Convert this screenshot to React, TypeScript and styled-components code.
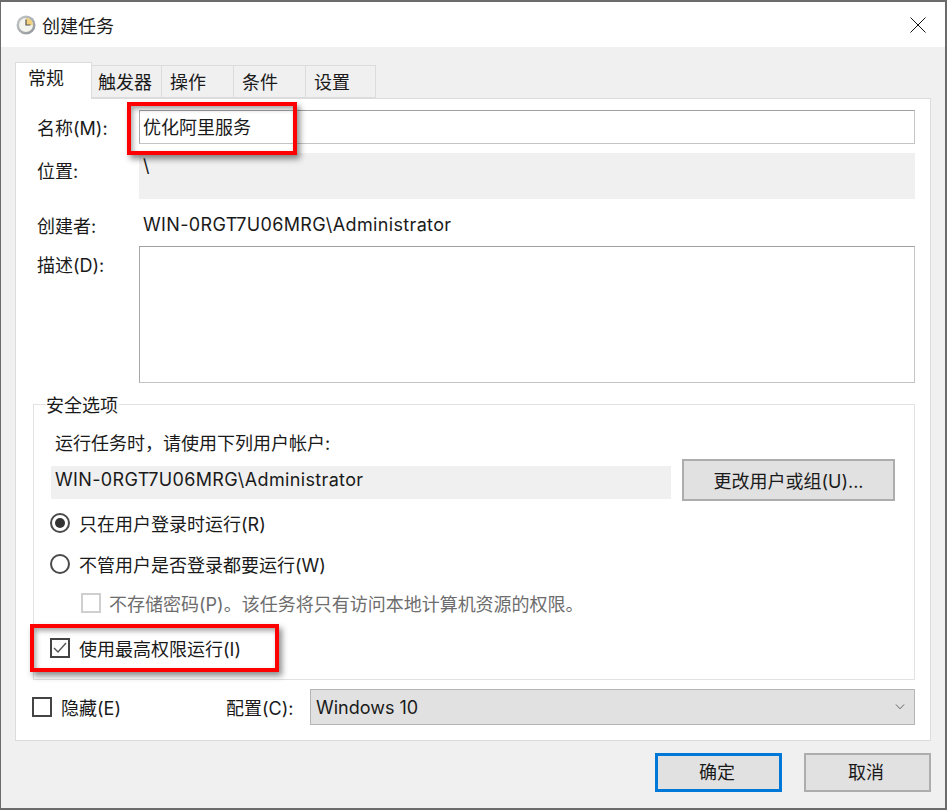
import styled, { createGlobalStyle } from 'styled-components';

const GlobalStyle = createGlobalStyle`
  html, body {
    margin: 0;
    padding: 0;
    background: #fff;
  }
  * {
    box-sizing: border-box;
  }
`;

const FONT = `Inter, "Noto Sans CJK SC", sans-serif`;

const Window = styled.div`
  position: relative;
  width: 947px;
  height: 810px;
  display: flex;
  flex-direction: column;
  border: 1px solid #6b6b6b;
  border-width: 2px 2px 2px 1px;
  background: #f0f0f0;
  font-family: ${FONT};
  font-size: 18px;
  color: #1a1a1a;
  overflow: hidden;
`;

const TitleBar = styled.div`
  height: 45px;
  flex-shrink: 0;
  display: flex;
  align-items: center;
  background: #fff;
  padding: 0 19px 0 15px;
  gap: 6px;
`;

const Title = styled.span`
  flex: 1;
  font-size: 18px;
`;

const TabStrip = styled.div`
  display: flex;
  align-items: flex-end;
  height: 36px;
  margin: 15px 0 0 14px;
`;

const ActiveTab = styled.div`
  position: relative;
  z-index: 1;
  height: 37px;
  width: 77px;
  margin-bottom: -1px;
  padding: 0 0 8px 12px;
  display: flex;
  align-items: center;
  background: #fff;
  border: 1px solid #dcdcdc;
  border-bottom-width: 0;
  white-space: nowrap;
`;

const Tab = styled.div<{ $width: number; $pad: number }>`
  height: 33px;
  width: ${(p) => p.$width}px;
  padding: 0 0 2px ${(p) => p.$pad}px;
  display: flex;
  align-items: center;
  background: #f0f0f0;
  border: 1px solid #dcdcdc;
  border-left-width: 0;
  white-space: nowrap;
`;

const Panel = styled.div`
  width: 916px;
  height: 643px;
  margin-left: 14px;
  padding: 11px 15px 0 21px;
  background: #fff;
  border: 1px solid #dcdcdc;
  display: flex;
  flex-direction: column;
`;

const FormRow = styled.div<{ $top: number; $height: number; $center?: boolean }>`
  display: flex;
  align-items: ${(p) => (p.$center ? 'center' : 'flex-start')};
  margin-top: ${(p) => p.$top}px;
  height: ${(p) => p.$height}px;
`;

const Label = styled.label<{ $offset?: number }>`
  width: 102px;
  flex-shrink: 0;
  padding-top: ${(p) => p.$offset ?? 0}px;
  white-space: nowrap;
`;

const TextBox = styled.div`
  flex: 1;
  height: 100%;
  padding: 2px 3px;
  background: #fff;
  border: 1px solid;
  border-color: #a0a0a0 #c4c4c4 #c4c4c4 #a8a8a8;
`;

const ReadOnlyBox = styled.div`
  flex: 1;
  height: 100%;
  padding: 2px 4px 0;
  background: #f0f0f0;
`;

const CreatorName = styled.span`
  flex: 1;
  padding: 0 4px 2px;
  letter-spacing: 0.35px;
`;

const Group = styled.div`
  position: relative;
  width: 882px;
  height: 276px;
  margin: 21px 0 0 -4px;
  padding: 25px 0 0 17px;
  border: 1px solid #e2e2e2;
`;

const Legend = styled.span`
  position: absolute;
  top: -11px;
  left: 12px;
  padding: 0 1px 0 0;
  background: #fff;
  line-height: 24px;
`;

const AccountLabel = styled.div`
  height: 26px;
  line-height: 28px;
  padding-left: 4px;
`;

const AccountRow = styled.div`
  display: flex;
  align-items: flex-start;
  margin-top: 3px;
  height: 42px;
`;

const AccountField = styled.div`
  width: 620px;
  height: 33px;
  margin-top: 7px;
  padding-left: 4px;
  line-height: 28px;
  letter-spacing: 0.35px;
  background: #f0f0f0;
`;

const Button = styled.div<{ $width: number; $height: number }>`
  width: ${(p) => p.$width}px;
  height: ${(p) => p.$height}px;
  display: flex;
  align-items: center;
  justify-content: center;
  background: #e1e1e1;
  border: 2px solid #adadad;
`;

const ChangeUserButton = styled(Button)`
  margin-left: 11px;
`;

const DialogButton = styled(Button)<{ $primary?: boolean }>`
  padding: 0 3px 3px 0;
  ${(p) => (p.$primary ? 'border: 3px solid #0078d7;' : '')}
`;

const OptionRow = styled.div<{ $top: number; $indent?: number; $gap?: number; $muted?: boolean }>`
  display: flex;
  align-items: center;
  margin-top: ${(p) => p.$top}px;
  margin-left: ${(p) => p.$indent ?? -1}px;
  height: 24px;
  gap: ${(p) => p.$gap ?? 9}px;
  color: ${(p) => (p.$muted ? '#6d6d6d' : 'inherit')};
`;

const Radio = styled.span<{ $checked?: boolean }>`
  width: 20px;
  height: 20px;
  flex-shrink: 0;
  display: flex;
  align-items: center;
  justify-content: center;
  border: 2px solid #4a4a4a;
  border-radius: 50%;
  &::after {
    content: '';
    width: 10px;
    height: 10px;
    border-radius: 50%;
    background: ${(p) => (p.$checked ? '#333' : 'transparent')};
  }
`;

const CheckBox = styled.span<{ $disabled?: boolean }>`
  width: 20px;
  height: 20px;
  flex-shrink: 0;
  display: flex;
  align-items: center;
  justify-content: center;
  background: #fff;
  border: 2px solid ${(p) => (p.$disabled ? '#cfcfcf' : '#444')};
`;

const BottomRow = styled.div`
  display: flex;
  align-items: center;
  height: 36px;
  margin: 9px 0 0 -5px;
`;

const HiddenOption = styled.div`
  display: flex;
  align-items: center;
  gap: 9px;
  width: 194px;
`;

const ConfigLabel = styled.span`
  width: 84px;
  white-space: nowrap;
`;

const Select = styled.div`
  width: 605px;
  height: 36px;
  display: flex;
  align-items: center;
  justify-content: space-between;
  padding: 0 9px 0 5px;
  background: #e1e1e1;
  border: 1px solid #b5b5b5;
`;

const Footer = styled.div`
  display: flex;
  justify-content: flex-end;
  gap: 22px;
  margin-top: 12px;
  padding-right: 14px;
`;

const Callout = styled.div<{ $left: number; $top: number; $w: number; $h: number }>`
  position: absolute;
  left: ${(p) => p.$left}px;
  top: ${(p) => p.$top}px;
  width: ${(p) => p.$w}px;
  height: ${(p) => p.$h}px;
  border: 4px solid #f00;
  box-shadow:
    3px 4px 6px rgba(0, 0, 0, 0.45),
    inset 2px 3px 5px rgba(0, 0, 0, 0.35);
  pointer-events: none;
`;

const ClockIcon = () => (
  <svg width="20" height="20" viewBox="0 0 20 20">
    <defs>
      <linearGradient id="rim" x1="0" y1="0" x2="1" y2="1">
        <stop offset="0" stopColor="#c9ccce" />
        <stop offset="1" stopColor="#8d9296" />
      </linearGradient>
    </defs>
    <circle cx="10" cy="10" r="9.5" fill="url(#rim)" />
    <circle cx="10" cy="10" r="7" fill="#f4f4ee" />
    <path d="M10 3 A7 7 0 0 1 17 10 L10 10 Z" fill="#f2d27c" />
    <path d="M10 4.5 V10 H14.5" fill="none" stroke="#555" strokeWidth="1.2" />
  </svg>
);

const CloseIcon = () => (
  <svg width="16" height="16" viewBox="0 0 16 16">
    <path d="M0.5 0.5 L15.5 15.5 M15.5 0.5 L0.5 15.5" stroke="#111" strokeWidth="1" fill="none" />
  </svg>
);

const CheckMark = () => (
  <svg width="16" height="16" viewBox="0 0 16 16">
    <path d="M2 8 L6 12 L14 3" stroke="#555" strokeWidth="1.4" fill="none" />
  </svg>
);

const Chevron = () => (
  <svg width="10" height="6" viewBox="0 0 10 6">
    <path d="M1 0.5 L5 4.8 L9 0.5" stroke="#666" strokeWidth="1" fill="none" />
  </svg>
);

const ACCOUNT = 'WIN-0RGT7U06MRG\\Administrator';
const TABS = [
  { name: '触发器', width: 70, pad: 6 },
  { name: '操作', width: 72, pad: 8 },
  { name: '条件', width: 72, pad: 8 },
  { name: '设置', width: 70, pad: 8 },
];

export default function App() {
  return (
    <>
      <GlobalStyle />
      <Window>
        <TitleBar>
          <ClockIcon />
          <Title>创建任务</Title>
          <CloseIcon />
        </TitleBar>
        <TabStrip>
          <ActiveTab>常规</ActiveTab>
          {TABS.map((t) => (
            <Tab key={t.name} $width={t.width} $pad={t.pad}>
              {t.name}
            </Tab>
          ))}
        </TabStrip>
        <Panel>
          <FormRow $top={0} $height={34} $center>
            <Label>名称(M):</Label>
            <TextBox>优化阿里服务</TextBox>
          </FormRow>
          <FormRow $top={9} $height={46}>
            <Label $offset={4}>位置:</Label>
            <ReadOnlyBox>\</ReadOnlyBox>
          </FormRow>
          <FormRow $top={13} $height={26} $center>
            <Label>创建者:</Label>
            <CreatorName>{ACCOUNT}</CreatorName>
          </FormRow>
          <FormRow $top={8} $height={137}>
            <Label $offset={5}>描述(D):</Label>
            <TextBox />
          </FormRow>
          <Group>
            <Legend>安全选项</Legend>
            <AccountLabel>运行任务时，请使用下列用户帐户:</AccountLabel>
            <AccountRow>
              <AccountField>{ACCOUNT}</AccountField>
              <ChangeUserButton $width={213} $height={42}>
                更改用户或组(U)...
              </ChangeUserButton>
            </AccountRow>
            <OptionRow $top={10}>
              <Radio $checked />
              只在用户登录时运行(R)
            </OptionRow>
            <OptionRow $top={17}>
              <Radio />
              不管用户是否登录都要运行(W)
            </OptionRow>
            <OptionRow $top={15} $indent={30} $gap={8} $muted>
              <CheckBox $disabled />
              不存储密码(P)。该任务将只有访问本地计算机资源的权限。
            </OptionRow>
            <OptionRow $top={21}>
              <CheckBox>
                <CheckMark />
              </CheckBox>
              使用最高权限运行(I)
            </OptionRow>
          </Group>
          <BottomRow>
            <HiddenOption>
              <CheckBox />
              隐藏(E)
            </HiddenOption>
            <ConfigLabel>配置(C):</ConfigLabel>
            <Select>
              Windows 10
              <Chevron />
            </Select>
          </BottomRow>
        </Panel>
        <Footer>
          <DialogButton $primary $width={127} $height={39}>确定</DialogButton>
          <DialogButton $width={127} $height={39}>取消</DialogButton>
        </Footer>
        <Callout $left={126} $top={100} $w={170} $h={53} />
        <Callout $left={29} $top={622} $w={249} $h={48} />
      </Window>
    </>
  );
}
